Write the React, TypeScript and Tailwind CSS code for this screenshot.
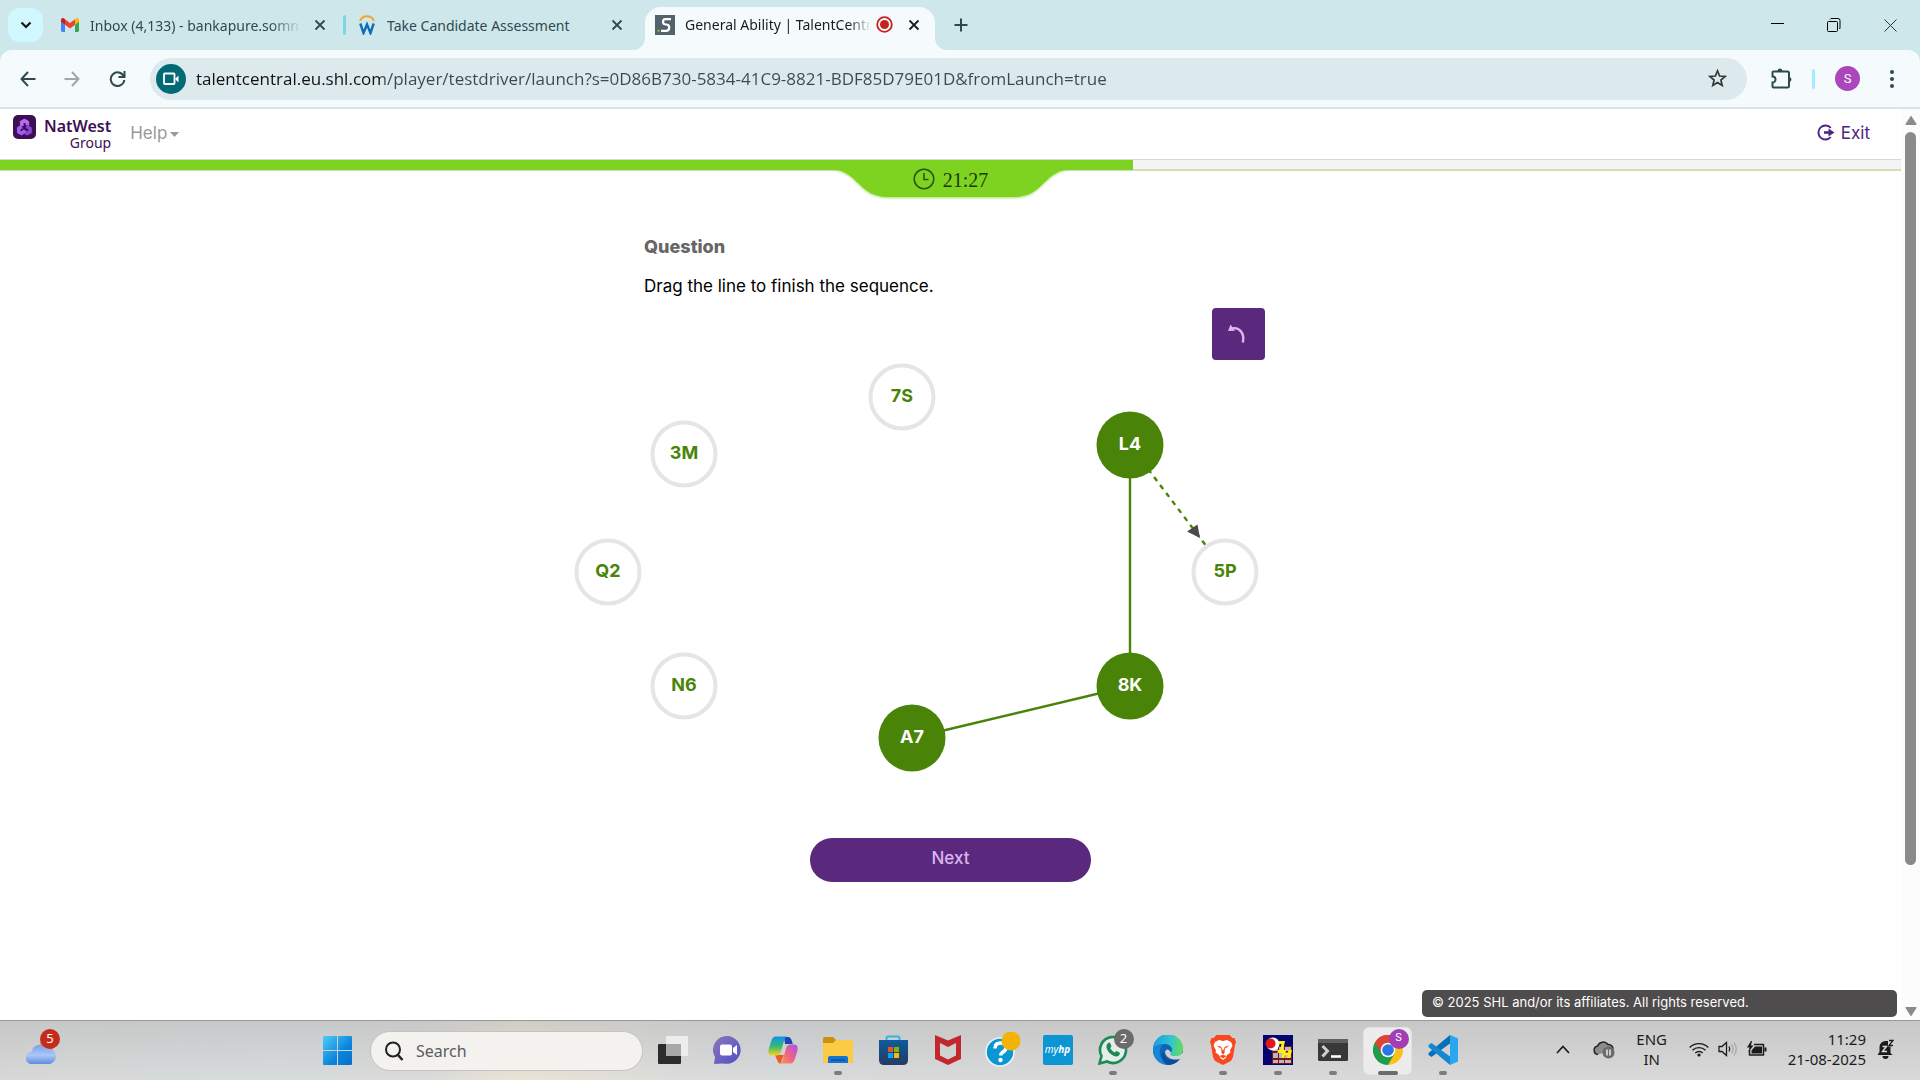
import React from "react";

type Tone = "open" | "linked";
const nodes: { id: string; x: number; y: number; tone: Tone }[] = [
  { id: "7S", x: 332, y: 37, tone: "open" },
  { id: "3M", x: 114, y: 94, tone: "open" },
  { id: "L4", x: 560, y: 85, tone: "linked" },
  { id: "Q2", x: 38, y: 212, tone: "open" },
  { id: "5P", x: 655, y: 212, tone: "open" },
  { id: "N6", x: 114, y: 326, tone: "open" },
  { id: "8K", x: 560, y: 326, tone: "linked" },
  { id: "A7", x: 342, y: 378, tone: "linked" },
];

function CloseIcon({ className = "" }: { className?: string }) {
  return (
    <svg width="12" height="12" viewBox="0 0 12 12" className={className} fill="none" stroke="currentColor" strokeWidth="1.8">
      <path d="M1.5 1.5 10.5 10.5M10.5 1.5 1.5 10.5" />
    </svg>
  );
}

function GmailIcon() {
  return (
    <svg width="18" height="14" viewBox="0 0 18 14">
      <path d="M0 2v10.6C0 13.400.6 14 1.300 14H4V6.500z" fill="#4285f4" />
      <path d="M14 6.500V14h2.700c.7 0 1.300-.6 1.300-1.400V2z" fill="#34a853" />
      <path d="M14 1.200v5.500l4-3V2c0-1.700-1.900-2.500-3.200-1.500z" fill="#fbbc04" />
      <path d="M4 6.700V1.200l5 3.800 5-3.800v5.500L9 10.500z" fill="#ea4335" />
      <path d="M0 2v1.700l4 3V1.200L3.200.5C1.900-.5 0 .3 0 2z" fill="#c5221f" />
    </svg>
  );
}

function WIcon() {
  return (
    <svg width="18" height="20" viewBox="0 0 18 20" fill="none">
      <path d="M2 5.800C3.500 2.500 6 1.200 9 1.200s5.500 1.300 7 4.600" stroke="#f5a32c" strokeWidth="2" />
      <path d="M2.300 8.500 5.500 18 9 9.500 12.500 18l3.200-9.500" stroke="#0f6cb8" strokeWidth="2.400" />
    </svg>
  );
}

function TabStrip() {
  return (
    <div className="flex h-[50px] items-center bg-[#cee7eb] text-[#2f4a4f]">
      <button aria-label="Search tabs" className="ml-2 flex h-[34px] w-[35px] shrink-0 items-center justify-center rounded-xl bg-[#d0f8ff] text-[#111]">
        <svg width="12" height="8" viewBox="0 0 12 8" fill="none" stroke="currentColor" strokeWidth="2.200"><path d="M1.500 1.500 6 6l4.500-4.500" /></svg>
      </button>
      <div className="ml-[18px] flex w-[282px] shrink-0 items-center">
        <GmailIcon />
        <span className="ml-[11px] w-[212px] whitespace-nowrap text-[14px] [mask-image:linear-gradient(to_right,#000_85%,transparent)]">Inbox (4,133) - bankapure.somn</span>
        <button aria-label="Close tab" className="ml-3"><CloseIcon /></button>
      </div>
      <div className="h-5 w-[3px] shrink-0 rounded bg-[#7ad6ea]" />
      <div className="ml-[12px] flex w-[266px] shrink-0 items-center">
        <WIcon />
        <span className="ml-[11px] w-[224px] whitespace-nowrap text-[14px]">Take Candidate Assessment</span>
        <button aria-label="Close tab"><CloseIcon /></button>
      </div>
      <div className="relative ml-[21px] flex h-[43px] w-[290px] shrink-0 items-center self-end rounded-t-2xl bg-[#f5fbfd] text-[#1b1c1d]">
        <svg className="absolute bottom-0 -left-3" width="12" height="12"><path d="M12 0v12H0A12 12 0 0 0 12 0z" fill="#f5fbfd" /></svg>
        <svg className="absolute bottom-0 -right-3" width="12" height="12"><path d="M0 0v12h12A12 12 0 0 1 0 0z" fill="#f5fbfd" /></svg>
        <svg className="mb-2 ml-[10px]" width="20" height="20" viewBox="0 0 20 20">
          <rect width="20" height="20" fill="#54636b" />
          <path d="M16 4.200H10.500C7.500 4.200 7 9 10.300 9.500h1.500c3.600.6 3 6.300-.6 6.300H6" fill="none" stroke="#fff" strokeWidth="2.200" />
          <rect x="2.500" y="14.700" width="2" height="2" fill="#7fd320" />
        </svg>
        <span className="mb-2 ml-[10px] w-[186px] whitespace-nowrap text-[14px] [mask-image:linear-gradient(to_right,#000_88%,transparent)]">General Ability | TalentCentr</span>
        <svg className="mb-2 ml-[5px]" width="17" height="17" viewBox="0 0 17 17"><circle cx="8.500" cy="8.500" r="7.300" fill="none" stroke="#c5221f" strokeWidth="1.800" /><circle cx="8.500" cy="8.500" r="4.500" fill="#c5221f" /></svg>
        <button aria-label="Close tab" className="mb-2 ml-[15px]"><CloseIcon /></button>
      </div>
      <button aria-label="New tab" className="ml-[19px]">
        <svg width="14" height="14" viewBox="0 0 14 14" stroke="currentColor" strokeWidth="2"><path d="M7 0.500v13M0.500 7h13" /></svg>
      </button>
      <div className="ml-auto flex shrink-0 items-center gap-[43px] pr-[23px] text-black">
        <button aria-label="Minimize"><svg width="13" height="12" stroke="currentColor"><path d="M0 4.500h13" /></svg></button>
        <button aria-label="Restore"><svg width="14" height="14" viewBox="0 0 14 14" fill="none" stroke="currentColor"><rect x=".5" y="3.500" width="10" height="10" rx="1" /><path d="M3 1.500 4 .5h7a2 2 0 0 1 2 2V10l-.5 1" /></svg></button>
        <button aria-label="Close window"><svg width="13" height="13" viewBox="0 0 13 13" fill="none" stroke="#333"><path d="M.5.5l12 12M12.500.5l-12 12" /></svg></button>
      </div>
    </div>
  );
}

function Toolbar() {
  return (
    <div className="bg-[#cee7eb]">
      <div className="flex h-[59px] items-center rounded-t-xl border-b-2 border-[#d9e4e7] bg-[#f5fbfd] text-[#2f4a4f]">
        <button aria-label="Back" className="ml-5"><svg width="16" height="16" viewBox="0 0 16 16" fill="none" stroke="currentColor" strokeWidth="2"><path d="M8 1 1.500 8 8 15M1.500 8H15.500" /></svg></button>
        <button aria-label="Forward" className="ml-[28px] text-[#a1a7a9]"><svg width="16" height="16" viewBox="0 0 16 16" fill="none" stroke="currentColor" strokeWidth="2"><path d="M8 1l6.500 7L8 15M14.500 8H.5" /></svg></button>
        <button aria-label="Reload" className="ml-[29px]"><svg width="17" height="17" viewBox="0 0 17 17" fill="none" stroke="currentColor" strokeWidth="2"><path d="M14.800 6.500A6.800 6.800 0 1 0 15.300 10M15.500 1v6H9.500" /></svg></button>
        <div className="ml-[24px] flex h-[42px] min-w-0 flex-1 items-center rounded-full bg-[#dceaee] pl-[6px] pr-[20px]">
          <span className="flex h-[30px] w-[30px] shrink-0 items-center justify-center rounded-full bg-[#026a75]">
            <svg width="16" height="14" viewBox="0 0 16 14" fill="none" stroke="#fff" strokeWidth="1.800"><rect x="1" y="1.500" width="10.500" height="10.500" rx=".8" /><path d="M12 7l3.500-3.500v7z" fill="#fff" stroke="none" /></svg>
          </span>
          <input
            aria-label="Address"
            defaultValue="talentcentral.eu.shl.com/player/testdriver/launch?s=0D86B730-5834-41C9-8821-BDF85D79E01D&fromLaunch=true"
            className="ml-[10px] min-w-0 flex-1 bg-[linear-gradient(to_right,#111_184px,#3c4a4d_184px)] bg-clip-text font-['Open_Sans'] text-[17px] text-transparent outline-none"
          />
          <button aria-label="Bookmark" className="text-[#33393b]"><svg width="19" height="19" viewBox="0 0 19 19" fill="none" stroke="currentColor" strokeWidth="1.700"><path d="M9.500 1.800l2.100 5.200 5.500.4-4.200 3.600 1.300 5.500-4.700-3-4.700 3 1.300-5.500L1.900 7.400l5.500-.4z" /></svg></button>
        </div>
        <button aria-label="Extensions" className="ml-6"><svg width="21" height="21" viewBox="0 0 21 21"><path d="M2.500 3.500h14a1.500 1.500 0 0 1 1.500 1.500v13a1.500 1.500 0 0 1-1.500 1.500h-14A1 1 0 0 1 1.500 18.500V14.500a2.800 2.800 0 0 0 0-6V4.500a1 1 0 0 1 1-1z" fill="none" stroke="currentColor" strokeWidth="2" /><path d="M6.500 3a2.500 2.500 0 0 1 5 0zM18 9a2.500 2.500 0 0 1 0 5z" fill="currentColor" /></svg></button>
        <div className="ml-5 h-5 w-[3px] rounded bg-[#a5ecfb]" />
        <button aria-label="Profile" className="ml-5 flex h-[25px] w-[25px] items-center justify-center rounded-full bg-[#ab47bc] font-[Roboto] text-[13px] text-white">S</button>
        <button aria-label="Menu" className="mr-[26px] ml-[30px]"><svg width="4" height="18" viewBox="0 0 4 18" fill="currentColor"><circle cx="2" cy="2" r="2" /><circle cx="2" cy="9" r="2" /><circle cx="2" cy="16" r="2" /></svg></button>
      </div>
    </div>
  );
}

function PageHeader() {
  return (
    <div className="flex h-[51px] items-start border-b border-[#d8d8d8] bg-white">
      <div className="mt-[6px] ml-[13px] flex items-start text-[#3c1053]">
        <svg width="23" height="24" viewBox="0 0 23 24">
          <rect width="23" height="24" rx="5" fill="#3c1053" />
          <g fill="none" strokeLinejoin="round" strokeWidth="3.600">
            <path d="M9 11 8.600 7.200l2.900-1.700L14.400 7.200v3" stroke="#b86af2" />
            <path d="M13.500 11l3.600 2.400v3.400l-2.900 1.600-3-2" stroke="#8448d4" />
            <path d="M12 15.500 8.600 18.400 5.700 16.800V13.400L9 11.600" stroke="#a35cf0" />
          </g>
        </svg>
        <div className="ml-2 flex flex-col items-end font-['Noto_Sans']">
          <span className="mt-[2px] text-[16px] leading-[18px] font-semibold">NatWest</span>
          <span className="text-[14px] leading-[16px]">Group</span>
        </div>
      </div>
      <button className="mt-[12px] ml-[19px] flex items-center font-['Inter'] text-[17px] leading-6 text-[#999]">
        Help
        <svg className="mt-[2px] ml-[3px]" width="9" height="5"><path d="M0 0h9L4.500 5z" fill="currentColor" /></svg>
      </button>
      <a href="#exit" className="mt-[12px] mr-[31px] ml-auto flex items-center gap-[6px] font-['Inter'] text-[17px] leading-6 text-[#4f2380]">
        <svg className="mb-[2px]" width="18" height="17" viewBox="0 0 18 17" fill="none" stroke="currentColor" strokeWidth="1.900"><path d="M13.800 4A7 7 0 1 0 13.800 13" /><path d="M7 8.500h6" strokeWidth="2.600" /><path d="M11.500 4.500 17.500 8.500l-6 4z" fill="currentColor" stroke="none" /></svg>
        Exit
      </a>
    </div>
  );
}

function Timer() {
  return (
    <div className="relative h-[11px] border-b-2 border-[#cfe0b6] bg-[#f4f4f4]">
      <div className="h-[10px] w-[59.6%] bg-[#7ed321]" />
      <div className="absolute top-[9px] left-1/2 h-[29px] w-[246px] -translate-x-1/2">
        <svg width="246" height="29" className="absolute inset-0 drop-shadow-[0_1px_1px_rgba(126,211,33,.7)]"><path d="M0 0C32 0 28 28 61 28H185C218 28 214 0 246 0z" fill="#7ed321" /></svg>
        <div className="relative flex h-[22px] items-center justify-center gap-[8px] font-['Liberation_Serif'] text-[20px] text-[#1c3a08]">
          <svg className="mb-[2px]" width="22" height="22" viewBox="0 0 22 22" fill="none" stroke="#2c5512" strokeWidth="1.600"><circle cx="11" cy="11" r="9.800" /><path d="M11 5v6.500h4.500" /></svg>
          21:27
        </div>
      </div>
    </div>
  );
}

function SequenceBoard() {
  return (
    <div className="relative h-[412px]">
      <svg width="761" height="412" className="absolute inset-0" fill="none" stroke="#498409" strokeWidth="2.400">
        <path d="M342 378 560 326V85" />
        <path d="M560 85 655 211" strokeDasharray="5 5" />
        <path d="M630 178 617 171.500 627.500 164.500z" fill="#4a4a4a" stroke="none" />
      </svg>
      {nodes.map((n) => (
        <button
          key={n.id}
          style={{ left: n.x, top: n.y }}
          className={
            n.tone === "linked"
              ? "absolute flex h-[67px] w-[67px] -translate-x-1/2 -translate-y-1/2 items-center justify-center rounded-full bg-[#498409] pb-1 font-['Inter'] text-[18px] font-bold text-white"
              : "absolute flex h-[67px] w-[67px] -translate-x-1/2 -translate-y-1/2 items-center justify-center rounded-full border-4 border-[#e5e5e5] bg-white pb-1 font-['Inter'] text-[18px] font-bold text-[#498409]"
          }
        >
          {n.id}
        </button>
      ))}
    </div>
  );
}

function Page() {
  return (
    <div className="flex min-h-0 flex-1 bg-white">
      <main className="flex min-w-0 flex-1 flex-col">
        <PageHeader />
        <Timer />
        <div className="mx-auto w-[761px] pt-16">
          <h1 className="pl-[74px] font-['Inter'] text-[18px] leading-6 font-extrabold text-[#666]">Question</h1>
          <p className="mt-[15px] pl-[74px] font-['Inter'] text-[17px] leading-6 text-black">Drag the line to finish the sequence.</p>
          <div className="mt-[10px] flex justify-end pr-[66px]">
            <button aria-label="Undo" className="flex h-[52px] w-[53px] items-center justify-center rounded bg-[#5a287d] pr-1">
              <svg width="20" height="20" viewBox="0 0 20 20" fill="none"><path d="M5 4.500C12 2.500 18 9 15.800 18.500" stroke="#dcb8f0" strokeWidth="2.400" /><path d="M1 7 3.500 0.500 8 6.800z" fill="#dcb8f0" /></svg>
            </button>
          </div>
          <SequenceBoard />
          <button className="mx-auto mt-[66px] block h-[44px] w-[281px] rounded-full bg-[#5a287d] pb-[3px] font-['Inter'] text-[17px] font-medium text-[#d9b5ee]">Next</button>
        </div>
        <footer className="mt-auto mr-1 mb-[3px] h-[27px] w-[475px] self-end rounded-[5px] bg-[#4f4c4d] px-[10px] font-['Inter'] text-[13px] leading-[25px] text-white">© 2025 SHL and/or its affiliates. All rights reserved.</footer>
      </main>
      <div className="flex w-[19px] flex-col items-center bg-[#fcfcfc] pt-[6px] pb-[3px]">
        <svg width="12" height="10"><path d="M6 0.500 11.500 9q.3 1-.8 1H1.300Q.2 10 .5 9z" fill="#8a8a8a" /></svg>
        <div className="mt-[7px] mb-[142px] w-[11px] flex-1 rounded-full bg-[#8a8a8a]" />
        <svg width="12" height="10"><path d="M6 9.500 11.500 1q.3-1-.8-1H1.300Q.2 0 .5 1z" fill="#8a8a8a" /></svg>
      </div>
    </div>
  );
}

function TaskbarApp({ label, running, active, children }: { label: string; running?: boolean; active?: boolean; children: React.ReactNode }) {
  return (
    <button aria-label={label} className="relative flex h-[60px] w-[55px] shrink-0 items-center justify-center pb-[2px]">
      {active && <span className="absolute inset-x-[3px] inset-y-[6px] rounded-md border border-[#e2e2e2] bg-[#ececec]" />}
      <span className="relative">{children}</span>
      {running && !active && <span className="absolute bottom-[6px] h-1 w-2 rounded-full bg-[#7c7c7c]" />}
      {active && <span className="absolute bottom-[6px] h-1 w-5 rounded-full bg-[#6c6c6c]" />}
    </button>
  );
}

function Taskbar() {
  return (
    <div className="flex h-[60px] shrink-0 items-center border-t border-[#989898] bg-[linear-gradient(to_bottom,rgba(190,190,190,.6),rgba(225,225,225,.3)),linear-gradient(to_right,#d4d4d4_0%,#d3dadc_14%,#d8d8d8_22%,#ece5d0_27%,#dcdcd8_34%,#d4d8da_40%,#d6d6d6_55%,#d6d6d6_100%)] text-[#1b1b1b]">
      <button aria-label="Weather" className="relative ml-[25px] h-[60px] w-[36px] shrink-0">
        <svg width="36" height="60" viewBox="0 0 36 60">
          <defs><linearGradient id="cl" x1="0" y1="0" x2="0" y2="1"><stop offset="0" stopColor="#7d9fe6" /><stop offset=".55" stopColor="#a9c8f5" /><stop offset="1" stopColor="#5f8be0" /></linearGradient></defs>
          <circle cx="22" cy="24" r="7" fill="#f28a1c" />
          <path d="M7 43a6 6 0 0 1-.5-12A8.500 8.500 0 0 1 22 27.500 7.500 7.500 0 0 1 24.500 43z" fill="url(#cl)" />
        </svg>
        <span className="absolute top-[8px] left-[15px] flex h-5 w-5 items-center justify-center rounded-full bg-[#c42b1c] text-[13px] text-white">5</span>
      </button>
      <button aria-label="Start" className="ml-[262px] shrink-0">
        <svg width="29" height="29" viewBox="0 0 29 29"><defs><linearGradient id="wn" x1="0" y1="0" x2="1" y2="1"><stop offset="0" stopColor="#4fcdf7" /><stop offset=".6" stopColor="#0a84dc" /><stop offset="1" stopColor="#0670cc" /></linearGradient></defs><path d="M1 0h13v14H0V1q0-1 1-1zM15 0h13q1 0 1 1v13H15zM0 15h14v14H1q-1 0-1-1zM15 15h14v13q0 1-1 1H15z" fill="url(#wn)" /></svg>
      </button>
      <div className="ml-[18px] flex h-10 w-[273px] shrink-0 items-center rounded-full border border-[#c3c3bf] bg-[#f3f2ef] pl-[13px]">
        <svg width="20" height="20" viewBox="0 0 20 20" fill="none" stroke="#222" strokeWidth="2"><circle cx="9" cy="8.500" r="7" /><path d="M13.500 13.500 18.500 19" strokeWidth="2.600" /></svg>
        <input aria-label="Search" placeholder="Search" className="ml-3 w-40 bg-transparent text-[16px] outline-none placeholder:text-[#5c5c5c]" />
      </div>
      <div className="ml-[2px] flex shrink-0">
        <TaskbarApp label="Task view">
          <svg width="30" height="30" viewBox="0 0 30 30"><rect x="0" y="9" width="23" height="20" rx="1" fill="#2c2c2c" /><rect x="8" y="1" width="22" height="20" rx="1" fill="#ededed" /><path d="M8 9h15v12H8z" fill="#a8a8a8" /></svg>
        </TaskbarApp>
        <TaskbarApp label="Meet">
          <svg width="30" height="30" viewBox="0 0 30 30"><defs><linearGradient id="mt" x1="0" y1="0" x2="1" y2="1"><stop offset="0" stopColor="#8f74b8" /><stop offset="1" stopColor="#4d52c8" /></linearGradient></defs><path d="M15.500 1A14 14 0 1 1 10 28.400L1 29l1-7A14 14 0 0 1 15.500 1z" fill="url(#mt)" /><rect x="7" y="9.500" width="12" height="11" rx="2" fill="#fff" /><path d="M20 13l4-3v10l-4-3z" fill="#fff" /></svg>
        </TaskbarApp>
        <TaskbarApp label="Copilot">
          <svg width="30" height="30" viewBox="0 0 30 30"><defs>
            <linearGradient id="c1" x1="0" y1="0" x2="0" y2="1"><stop offset="0" stopColor="#1292e8" /><stop offset=".5" stopColor="#31b87a" /><stop offset="1" stopColor="#f2d51e" /></linearGradient>
            <linearGradient id="c2" x1="1" y1="0" x2="0" y2="1"><stop offset="0" stopColor="#a558e8" /><stop offset=".5" stopColor="#ee5f8d" /><stop offset="1" stopColor="#fb9a4a" /></linearGradient></defs>
            <path d="M16 2h4.500Q22.500 2 23.500 5l1.300 4H17z" fill="#1747b5" />
            <path d="M7 20l2.500 6q.8 2.500 3 2.500L16 20z" fill="#ee5a2b" />
            <path d="M8 1.500h11q-2 .5-3.200 5L13 16.500q-1.200 4-4.500 4H4Q-1 20.500 1 13L3.500 5Q4.800 1.500 8 1.500z" fill="url(#c1)" />
            <path d="M22 28.500H11.500q2.500-.5 3.700-5L18 13.500q1.200-4 4.500-4H26q5 0 3.200 7L26.500 25Q25.200 28.500 22 28.500z" fill="url(#c2)" />
          </svg>
        </TaskbarApp>
        <TaskbarApp label="File Explorer" running>
          <svg width="30" height="30" viewBox="0 0 30 30"><path d="M0 4q0-2 2-2h8l3 3-2 3H0z" fill="#cf8f0a" /><path d="M0 8h10l3-3h17v23H0z" fill="#fbcb45" /><path d="M5 28v-5q0-2 2-2h16q2 0 2 2v5z" fill="#1474cf" /><path d="M8 25h14" stroke="#0a4d99" strokeWidth="1.300" /></svg>
        </TaskbarApp>
        <TaskbarApp label="Store">
          <svg width="30" height="30" viewBox="0 0 30 30"><defs><linearGradient id="st" x1="0" y1="0" x2="0" y2="1"><stop offset="0" stopColor="#0d5c9c" /><stop offset="1" stopColor="#273a63" /></linearGradient></defs><path d="M8.500 7V3q0-1.500 1.500-1.500h10q1.500 0 1.500 1.500v4" fill="none" stroke="#2cb9e8" strokeWidth="2" /><path d="M1 5h29v20q0 5-5 5H6q-5 0-5-5z" fill="url(#st)" /><path d="M10 12h5v5h-5z" fill="#f25022" /><path d="M16 12h5v5h-5z" fill="#7fba00" /><path d="M10 18h5v5h-5z" fill="#00a4ef" /><path d="M16 18h5v5h-5z" fill="#ffb900" /></svg>
        </TaskbarApp>
        <TaskbarApp label="McAfee">
          <svg width="28" height="30" viewBox="0 0 28 30"><path d="M1 0l13 5.500L27 0v24l-13 6L1 24zM6 8v12.500l8 4 8-4V8l-8 4z" fill="#c1272d" fillRule="evenodd" /></svg>
        </TaskbarApp>
        <TaskbarApp label="HP Support">
          <svg width="36" height="36" viewBox="0 0 36 36"><circle cx="15" cy="20" r="14" fill="#0c95d3" stroke="#e9f4fa" strokeWidth="1.600" /><path d="M10 16.500q0-5.500 5.500-5.500t5.500 4.500q0 3-3.500 4.800-1.800 1-1.800 3.200" fill="none" stroke="#fff" strokeWidth="3.600" /><circle cx="15.500" cy="28" r="2.200" fill="#fff" /><circle cx="26" cy="9" r="9.500" fill="#f2b307" /></svg>
        </TaskbarApp>
        <TaskbarApp label="myHP">
          <span className="flex h-[30px] w-[30px] items-center justify-center rounded-[2px] bg-[#0c95d3] text-[10px] text-white italic">my<b>hp</b></span>
        </TaskbarApp>
        <TaskbarApp label="WhatsApp" running>
          <svg width="30" height="30" viewBox="0 0 30 30"><path d="M1.500 28.500l2-7.500A13 13 0 1 1 9 26.500z" fill="#e6ece8" stroke="#1c8a57" strokeWidth="2.600" /><path d="M9.500 8.500q2-2 3 .2l1 2.600-1.300 1.900q1.600 3 4.600 4.400l1.700-1.500 3 1.300q1.300 1-.6 3-2 1.800-5 .6Q10.500 18.500 8.500 13q-.5-3 1-4.500z" fill="#1c8a57" /></svg>
          <span className="absolute -top-[6px] left-[16px] flex h-5 w-5 items-center justify-center rounded-full bg-[#6b6b6b] text-[13px] text-white">2</span>
        </TaskbarApp>
        <TaskbarApp label="Edge">
          <svg width="30" height="30" viewBox="0 0 30 30"><defs><linearGradient id="e1" x1="0" y1=".3" x2="1" y2=".4"><stop offset="0" stopColor="#1c9ae0" /><stop offset=".55" stopColor="#2fc3d8" /><stop offset="1" stopColor="#62dd55" /></linearGradient></defs><circle cx="15" cy="15" r="15" fill="#0f66b8" /><path d="M0 14A15 15 0 0 1 30 14c0 5-4 7-8 7-5 0-5-2-4-3.500 3-4-1-8.500-6-8.500C5 9 1 12 0 14z" fill="url(#e1)" /><path d="M0 14C2 11 6 9 10.500 9.300 6 12 5 20 10 25q3 3.500 7 4.800A15 15 0 0 1 0 14z" fill="#1686d9" /><path d="M10.500 16c-.6 7 7 11 16.500 7.500-3 4.500-8 6.500-12 6.500-6-2-8-9-4.500-14z" fill="#0e4e98" /><path d="M18 17.500C17 19 17 21 22 21c3 0 5.500-1 8-3.500v6L26.500 24C20 26 13 23 12 17q2-5 6 .5z" fill="#d0d3d4" /></svg>
        </TaskbarApp>
        <TaskbarApp label="Brave" running>
          <svg width="26" height="30" viewBox="0 0 26 30"><path d="M6.500 0h13l3 3 2 0 1.500 4-1 3-2 12q-1 3-3 4.500L13 30l-7-3.500Q4 25 3 22L1 10 0 7l1.500-4 2 0z" fill="#f8481f" /><path d="M5 7l4-2 4 1 4-1 4 2 1.500 3.500-2.500 5 .5 2-3.500 2.500q-.5 3-4 5-3.500-2-4-5l-3.500-2.500.5-2-2.500-5z" fill="#fff" /><path d="M6.500 10.500l4.500 1.300-.5 1.700zM19.500 10.500 15 11.800l.5 1.700zM11 11l2 5 2-5-.5 7L13 19.500 11.500 18zM9.500 21l3.500-1.300 3.500 1.300L13 23.500z" fill="#f8481f" /></svg>
        </TaskbarApp>
        <TaskbarApp label="JH" running>
          <svg width="30" height="30" viewBox="0 0 30 30"><path d="M0 0h30v30H0z" fill="#04046e" /><path d="M9 11h20v18H9z" fill="#7b1518" /><path d="M10 12h5v4h-5zM16 12h5v4h-5zM22 12h6v4h-6zM10 18h5v5h-5zM16 18h5v5h-5zM22 18h6v5h-6zM10 25h5v3h-5zM16 25h5v3h-5zM22 25h6v3h-6z" fill="#b9b9b9" /><circle cx="10" cy="9" r="6.500" fill="#fff" /><circle cx="7.500" cy="8.500" r="5" fill="#e01818" /><path d="M16 6h6l-2.500 12h-5l.5-3h2L18.500 9h-3zM20 15h3l-.5 2.500h2.500l.5-2.500H29l-2 8h-3l.5-3H22l-.5 3h-3z" fill="#ffee18" /></svg>
        </TaskbarApp>
        <TaskbarApp label="Terminal" running>
          <svg width="30" height="24" viewBox="0 0 30 24"><rect y="1" width="30" height="22" rx="1.500" fill="#383838" /><path d="M0 1h30v4H0z" fill="#606060" /><path d="M4.500 8l5 5-5 5.500" fill="none" stroke="#cfcfcf" strokeWidth="3" /><path d="M13 18.500h10" stroke="#fff" strokeWidth="2.600" /></svg>
        </TaskbarApp>
        <TaskbarApp label="Chrome" active>
          <svg width="30" height="30" viewBox="0 0 30 30"><circle cx="15" cy="15" r="15" fill="#fbc116" /><path d="M15 15 2 7.500A15 15 0 0 1 28 7.500z" fill="#dd4436" /><path d="M2 7.500A15 15 0 0 0 15 30l6.500-11.300L15 15z" fill="#1f9d4e" /><path d="M15 7.500h13A15 15 0 0 0 2 7.500l6.500 11.300z" fill="#dd4436" /><circle cx="15" cy="15" r="7.300" fill="#fff" /><circle cx="15" cy="15" r="5.800" fill="#2a75e8" /></svg>
          <span className="absolute -top-[6px] left-[16px] flex h-5 w-5 items-center justify-center rounded-full bg-[#a23db5] font-[Roboto] text-[11px] text-white">S</span>
        </TaskbarApp>
        <TaskbarApp label="VS Code" running>
          <svg width="30" height="30" viewBox="0 0 30 30"><path d="M22 0v8.500L3.500 22 .5 20v-2z" fill="#0a6fb8" /><path d="M22 30v-8.500L3.500 8 .5 10v2z" fill="#1587cf" /><path d="M22 0l8 3.500v23L22 30z" fill="#2aa6ef" /></svg>
        </TaskbarApp>
      </div>
      <div className="ml-auto flex shrink-0 items-center pb-[3px] text-[15px]">
        <button aria-label="Show hidden icons"><svg width="14" height="9" viewBox="0 0 14 9" fill="none" stroke="currentColor" strokeWidth="1.700"><path d="M1 8l6-6.500L13 8" /></svg></button>
        <button aria-label="OneDrive" className="ml-[23px]"><svg width="22" height="20" viewBox="0 0 22 20"><path d="M5 15.500a4.300 4.300 0 0 1-.4-8.500A6 6 0 0 1 15 5.500a4.500 4.500 0 0 1 5 5" fill="#8c8c8c" stroke="#222" strokeWidth="1.500" /><circle cx="15.500" cy="13.500" r="6" fill="#6a6a6a" /><path d="M14 10.500v6M17 10.500v6" stroke="#fff" strokeWidth="1.300" /></svg></button>
        <button className="ml-[21px] w-8 text-center leading-5">ENG<br />IN</button>
        <button aria-label="Network, volume and battery" className="ml-[21px] flex items-center gap-[9px]">
          <svg width="20" height="16" viewBox="0 0 20 16" fill="none" stroke="currentColor" strokeWidth="1.400"><path d="M.7 6.500a13 13 0 0 1 18.600 0M3.500 9.300a9.200 9.200 0 0 1 13 0M6.300 12a5.300 5.300 0 0 1 7.400 0" /><circle cx="10" cy="14" r="1.600" fill="currentColor" stroke="none" /></svg>
          <svg width="20" height="16" viewBox="0 0 20 16" fill="none" stroke="currentColor" strokeWidth="1.300"><path d="M1 5.500h3L8.500 1.500v13L4 10.500H1z" /><path d="M11 5.500q1.500 2.500 0 5" /><path d="M13.500 3.500q3 4.500 0 9M16 1.500q4.500 6.500 0 13" stroke="#a8a8a8" /></svg>
          <svg width="20" height="16" viewBox="0 0 20 16"><path d="M7 3.500h9.500V14H2.500V9" fill="none" stroke="currentColor" strokeWidth="1.500" strokeLinejoin="round" /><path d="M8 5.500h7v7H4.500V9.500zM17.500 6.500h2v4h-2zM4 0 0 6.500h2.500L1.500 11 6.500 4.500H4L5 0z" fill="currentColor" /></svg>
        </button>
        <button className="ml-[21px] text-right leading-5">11:29<br />21-08-2025</button>
        <button aria-label="Notifications" className="mr-[26px] ml-[11px]"><svg width="17" height="20" viewBox="0 0 17 20"><path d="M2.500 13V8a6 6 0 0 1 6-6h5v12l2 2H.5zM5.500 17h6a3 3 0 0 1-6 0z" fill="currentColor" /><path d="M5.500 7.500H9.500L5.500 12.500H10" fill="none" stroke="#ddd" strokeWidth="1.400" /><path d="M11 .5h6v7h-6z" fill="#d3d3d3" /><path d="M12 1.500h4l-4 5h4" fill="none" stroke="currentColor" strokeWidth="1.300" /></svg></button>
      </div>
    </div>
  );
}

export default function App() {
  return (
    <div className="flex h-screen flex-col overflow-hidden bg-white font-['Noto_Sans',sans-serif]">
      <TabStrip />
      <Toolbar />
      <Page />
      <Taskbar />
    </div>
  );
}
